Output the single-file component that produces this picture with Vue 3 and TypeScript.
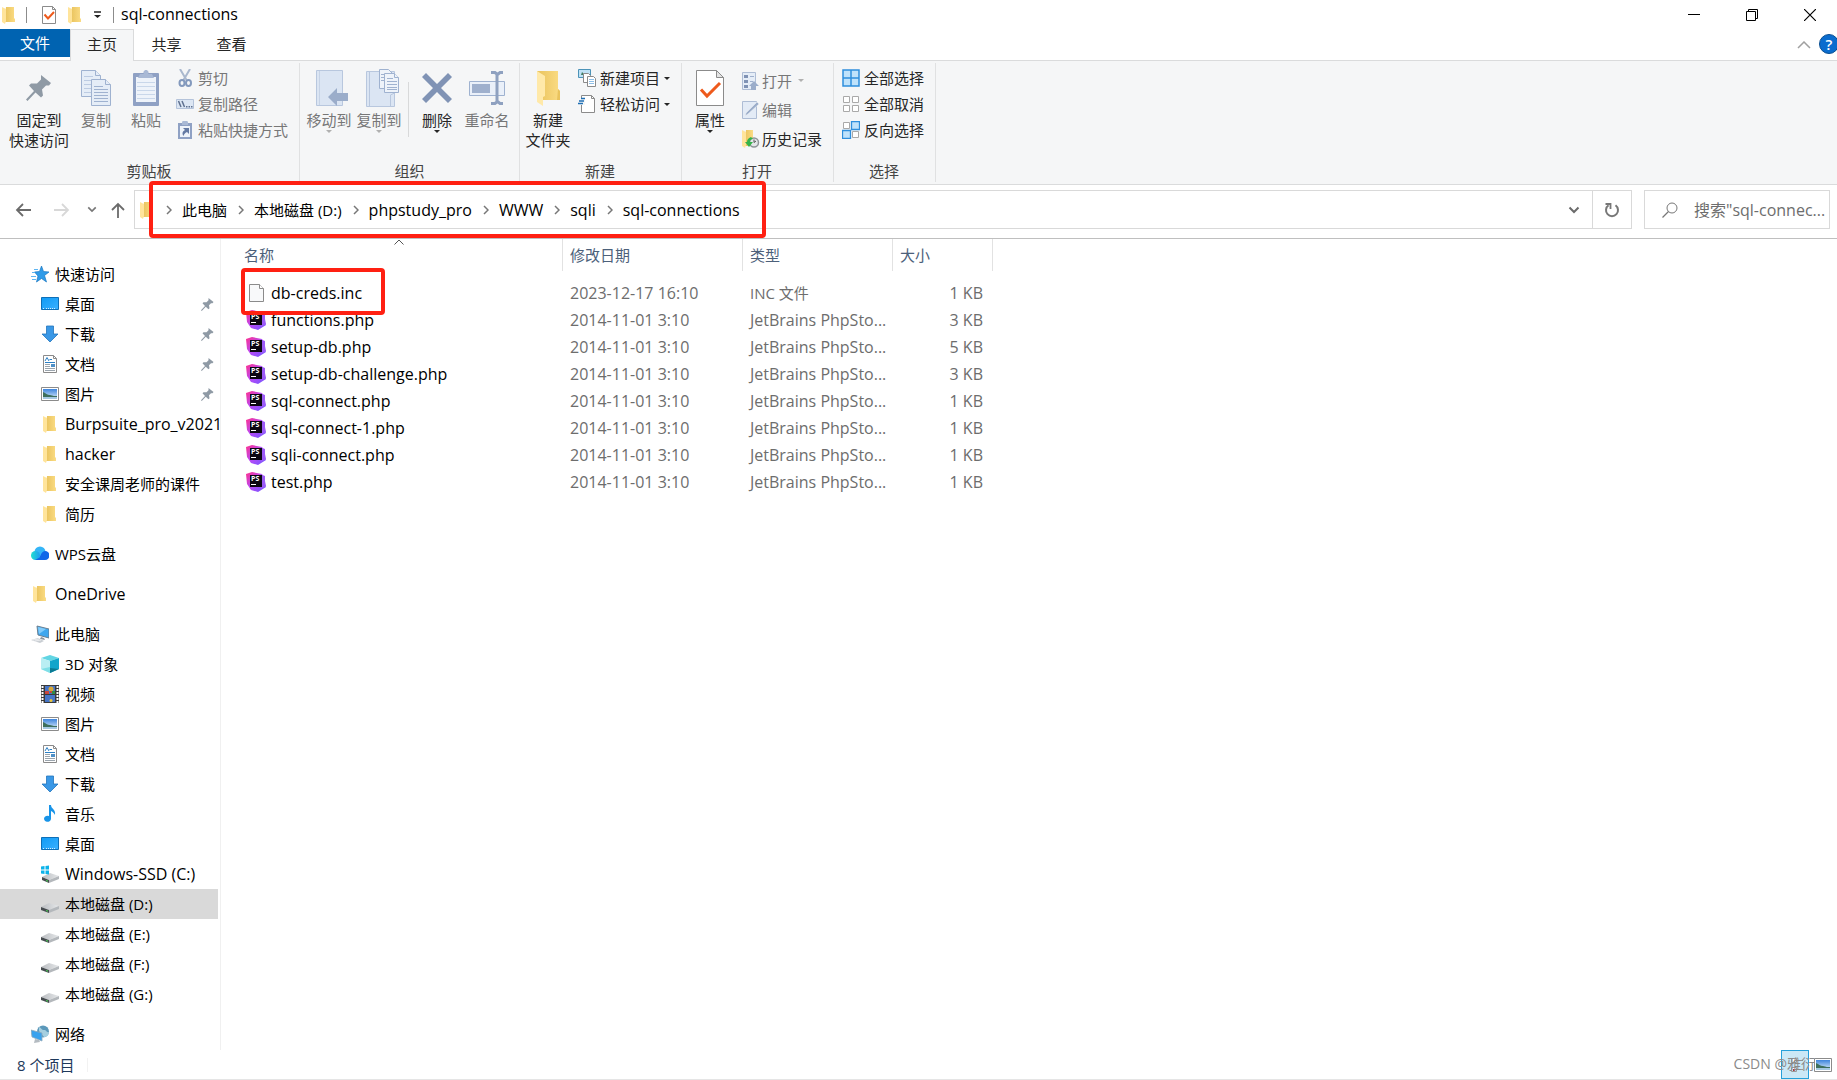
<script setup lang="ts">
interface NavItem {
  text: string
  icon: string
  root?: boolean
  gap?: boolean
  pinned?: boolean
  selected?: boolean
}
interface FileRow {
  name: string
  date: string
  type: string
  size: string
  icon: string
}

// Text without Chinese characters is set one size larger to match the weight of the Chinese text.
const isLatin = (text: string): boolean => !/[\u4e00-\u9fff]/.test(text)

const tabs: string[] = ['共享', '查看']
const crumbs: string[] = ['此电脑', '本地磁盘 (D:)', 'phpstudy_pro', 'WWW', 'sqli', 'sql-connections']

const nav: NavItem[] = [
  { text: '快速访问', icon: 'star', root: true },
  { text: '桌面', icon: 'desktop', pinned: true },
  { text: '下载', icon: 'download', pinned: true },
  { text: '文档', icon: 'document', pinned: true },
  { text: '图片', icon: 'picture', pinned: true },
  { text: 'Burpsuite_pro_v2021', icon: 'folder' },
  { text: 'hacker', icon: 'folder' },
  { text: '安全课周老师的课件', icon: 'folder' },
  { text: '简历', icon: 'folder' },
  { text: 'WPS云盘', icon: 'cloud', root: true, gap: true },
  { text: 'OneDrive', icon: 'folder', root: true, gap: true },
  { text: '此电脑', icon: 'pc', root: true, gap: true },
  { text: '3D 对象', icon: 'cube' },
  { text: '视频', icon: 'video' },
  { text: '图片', icon: 'picture' },
  { text: '文档', icon: 'document' },
  { text: '下载', icon: 'download' },
  { text: '音乐', icon: 'music' },
  { text: '桌面', icon: 'desktop' },
  { text: 'Windows-SSD (C:)', icon: 'windrive' },
  { text: '本地磁盘 (D:)', icon: 'drive', selected: true },
  { text: '本地磁盘 (E:)', icon: 'drive' },
  { text: '本地磁盘 (F:)', icon: 'drive' },
  { text: '本地磁盘 (G:)', icon: 'drive' },
  { text: '网络', icon: 'network', root: true, gap: true },
]

const php = (name: string, size: string): FileRow => ({
  name,
  date: '2014-11-01 3:10',
  type: 'JetBrains PhpSto...',
  size,
  icon: 'phpstorm',
})
const files: FileRow[] = [
  { name: 'db-creds.inc', date: '2023-12-17 16:10', type: 'INC 文件', size: '1 KB', icon: 'blank' },
  php('functions.php', '3 KB'),
  php('setup-db.php', '5 KB'),
  php('setup-db-challenge.php', '3 KB'),
  php('sql-connect.php', '1 KB'),
  php('sql-connect-1.php', '1 KB'),
  php('sqli-connect.php', '1 KB'),
  php('test.php', '1 KB'),
]
</script>

<template>
  <div class="window">
    <svg class="sprite" width="0" height="0" aria-hidden="true">
      <defs>
        <linearGradient id="g-fold" x1="0" x2="1"><stop offset="0" stop-color="#e9c35d" /><stop offset="1" stop-color="#fbdc84" /></linearGradient>
        <linearGradient id="g-desk" x1="0" y1="0" x2="1" y2="1"><stop offset="0" stop-color="#0f9bf5" /><stop offset="1" stop-color="#3bb0ff" /></linearGradient>
        <linearGradient id="g-sky" x1="0" y1="0" x2="0" y2="1"><stop offset="0" stop-color="#3d84dc" /><stop offset="1" stop-color="#e2f2ff" /></linearGradient>
        <linearGradient id="g-cloud" x1="0" x2="1"><stop offset="0" stop-color="#21dfd1" /><stop offset="1" stop-color="#1e9cf0" /></linearGradient>
        <linearGradient id="g-ps" x1="0" y1="0" x2="1" y2="1"><stop offset="0" stop-color="#ff318c" /><stop offset="0.5" stop-color="#b74af7" /><stop offset="1" stop-color="#6b57ff" /></linearGradient>
        <linearGradient id="g-drive" x1="0" x2="1"><stop offset="0" stop-color="#b9bcc0" /><stop offset="1" stop-color="#e6e8ea" /></linearGradient>
        <symbol id="i-folder" viewBox="0 0 18 18">
          <path d="M6 1h8v11l1 1v3H5z" fill="url(#g-fold)" /><path d="M2 1l4 2v12l-1 3-3-2z" fill="#ffe49b" />
        </symbol>
        <symbol id="i-bigfolder" viewBox="0 0 26 36">
          <path d="M2 1h21v18l2 2v9H8z" fill="url(#g-fold)" /><path d="M23 19l2 2v9h-3z" fill="#e9c35d" /><path d="M2 1l8 5v20l-2 1v9l-6-4z" fill="#ffe9a9" />
        </symbol>
        <symbol id="i-checkdoc" viewBox="0 0 28 36">
          <path d="M.5.5h20l7 7v28H.5z" fill="#fff" stroke="#8b8b8b" /><path d="M20.5.5v7h7z" fill="#e4e4e4" stroke="#8b8b8b" /><path d="M5 19.5l6 6.500L24 13" fill="none" stroke="#ee5a1c" stroke-width="3" />
        </symbol>
        <symbol id="i-smallcheck" viewBox="0 0 14 18">
          <path d="M.5.5h10l3 3v14H.5z" fill="#fff" stroke="#8b8b8b" /><path d="M10.500.5v3h3" fill="none" stroke="#8b8b8b" /><path d="M2.500 8.500l3.500 4 6-6.500" fill="none" stroke="#ee5a1c" stroke-width="2" />
        </symbol>
        <symbol id="i-pin" viewBox="0 0 26 26">
          <path d="M15 0l10 8-2 2.500h-3l-4 4 1 6-2 2-5.500-5L1.500 26 0 24.500l8-8.500L3 10.500l2-2h6l4-4z" fill="#8f9aa5" />
        </symbol>
        <symbol id="i-copy" viewBox="0 0 30 36">
          <g fill="#e5edf7" stroke="#9fb2d0"><path d="M.5.5h14l5 5v21H.5z" /><path d="M14.500.5v5h5" /><path d="M3 6.500h9M3 10.500h13M3 14.500h13M3 18.500h13M3 22.500h13" stroke="#bccbe2" /><path d="M10.500 9.500h14l5 5v21h-19z" /><path d="M24.500 9.500v5h5" /><path d="M13 16.500h9M13 19.500h14M13 22.500h14M13 25.500h14M13 28.500h14M13 31.500h14" /></g>
        </symbol>
        <symbol id="i-paste" viewBox="0 0 26 36">
          <rect y="3" width="26" height="33" rx="1" fill="#8fa1c4" /><path d="M3 7h20v25H3z" fill="#eef3fa" /><path d="M4 12.500h18M4 16.500h18M4 20.500h18M4 24.500h18M4 28.500h18" stroke="#c9d7ea" /><path d="M7 4h4a2.500 2.500 0 1 1 4 0h4l2 4H5z" fill="#a9b9d5" />
        </symbol>
        <symbol id="i-cut" viewBox="0 0 18 18">
          <path d="M4 0l6.500 11M14 0L7.500 11" stroke="#aab8ce" stroke-width="2" /><g fill="none" stroke="#8399bd" stroke-width="2"><ellipse cx="6" cy="14" rx="2.500" ry="3" /><ellipse cx="12.500" cy="14" rx="2.500" ry="3" /></g>
        </symbol>
        <symbol id="i-path" viewBox="0 0 18 18">
          <path d="M.5 4.500h17v9H.5z" fill="#dce6f3" stroke="#b4c3da" /><path d="M2.500 6l2.500 6M6 6l2.500 6" stroke="#5f7190" stroke-width="1.500" /><path d="M10 11h1.500v1.500H10zM12.500 11H14v1.500h-1.500zM15 11h1.500v1.500H15z" fill="#5f7190" />
        </symbol>
        <symbol id="i-shortcut" viewBox="0 0 18 18">
          <path d="M2 2h14v16H2z" fill="#8fa1c4" /><path d="M6 1.500a3 2 0 0 1 6 0V4H6z" fill="#a9b9d5" /><path d="M4 5h10v11H4z" fill="#eef3fa" /><path d="M7 7h6v6l-2-2c-2 1-3 2-3.500 4C5.500 12 7 10 9 9z" fill="#6379a3" />
        </symbol>
        <symbol id="i-moveto" viewBox="-8 0 42 36">
          <path d="M.5.5h26v35H.5z" fill="#dbe5f3" stroke="#b8c7de" /><path d="M3.500 1v34" stroke="#c6d3e6" /><path d="M12 27l9-9v5h11v8H21v5z" fill="#9badca" />
        </symbol>
        <symbol id="i-copyto" viewBox="-8 0 42 38">
          <path d="M.5 2.500h28v35H.5z" fill="#dbe5f3" stroke="#b8c7de" /><path d="M3.500 3v34M24.500 37V26l4-2v13" fill="none" stroke="#b8c7de" /><g fill="#eef3fa" stroke="#9fb2d0"><path d="M13.500.5h9l4 4v15h-13z" /><path d="M15 5.500h8M15 8.500h8M15 11.500h8" /><path d="M18.500 4.500h10l4 4v15h-14z" /><path d="M28.500 4.500v4h4M21 9.500h6M21 12.500h10M21 15.500h10M21 18.500h10M21 20.500h10" /></g>
        </symbol>
        <symbol id="i-delete" viewBox="0 0 32 32">
          <path d="M1 5l4-4 11 11L27 1l4 4-11 11 11 11-4 4-11-11L5 31l-4-4 11-11z" fill="#8093b5" />
        </symbol>
        <symbol id="i-rename" viewBox="0 0 36 34">
          <path d="M.5 10.500h35v14H.5z" fill="#eaf0f9" stroke="#9fb2d0" /><path d="M3 13h18v9H3z" fill="#9fb0cd" /><path d="M22 1.500h4l2.500 2 2.500-2h3M22 32.500h4l2.500-2 2.500 2h3M28 3v28" fill="none" stroke="#8fa1c0" stroke-width="3" />
        </symbol>
        <symbol id="i-newitem" viewBox="0 0 18 18">
          <path d="M.5.5h12v8H.5z" fill="#bfe2f6" stroke="#4c93b8" /><path d="M4 3l3 3H3z" fill="#3f7c62" /><path d="M5.500 4.500h5l2 2v7h-7z" fill="#fff" stroke="#8b8b8b" /><path d="M9.500 7.500h6l2 2v8h-8z" fill="#fff" stroke="#8b8b8b" /><path d="M11 10.500h5M11 12.500h5M11 14.500h5" stroke="#8ebfe8" />
        </symbol>
        <symbol id="i-easy" viewBox="0 0 18 18">
          <path d="M3.500.5h10l3 3v14h-13z" fill="#fff" stroke="#8b8b8b" /><path d="M13.500.5v3h3" fill="none" stroke="#8b8b8b" /><path d="M2 3h5v7H2z" fill="#f5f6f7" /><path d="M3 3.500h4M1 6h5M0 8.500h5" stroke="#1f6fb5" stroke-width="1.300" />
        </symbol>
        <symbol id="i-open" viewBox="0 0 18 18">
          <path d="M.5.5h13v17H.5z" fill="#e5edf7" stroke="#aebdd5" /><path d="M2 3h4v3H2zM2 8h4v3H2zM2 13h4v3H2z" fill="#8093b5" /><path d="M8 4.500h4M8 9.500h3" stroke="#9fb0cd" /><path d="M12 9l5 5h-3v4h-5v-4H7z" fill="#9badca" />
        </symbol>
        <symbol id="i-edit" viewBox="0 0 18 18">
          <path d="M.5.5h14v17H.5z" fill="#e3ebf6" stroke="#aebdd5" /><path d="M3 15l1-3L15 1l2 2L6 13z" fill="#9badca" stroke="#f5f6f7" stroke-width=".5" />
        </symbol>
        <symbol id="i-history" viewBox="0 0 18 18">
          <path d="M4 0h7v16H3z" fill="url(#g-fold)" /><path d="M0 0l4 2v13l-1 3-3-2z" fill="#ffe49b" /><circle cx="12" cy="12.500" r="4.500" fill="#e3e6e8" stroke="#8f9498" stroke-width="1.500" /><path d="M12 9.500v3l2-1.500" fill="none" stroke="#555" /><path d="M9 7c-3 1-4 3-4 5H3l4 5 4-5H8c0-2 1-3 3-3z" fill="#35b34a" />
        </symbol>
        <symbol id="i-selall" viewBox="0 0 18 18">
          <path d="M1 1h16v16H1zM9 1v16M1 9h16" fill="#bfe2fb" stroke="#2f8fdd" stroke-width="1.500" />
        </symbol>
        <symbol id="i-selnone" viewBox="0 0 18 18">
          <path d="M1.500 1.500h6v6h-6zM10.500 1.500h6v6h-6zM1.500 10.500h6v6h-6zM10.500 10.500h6v6h-6z" fill="#fff" stroke="#a9a9a9" />
        </symbol>
        <symbol id="i-selinv" viewBox="0 0 18 18">
          <path d="M1.500 1.500h6v6h-6zM10.500 10.500h6v6h-6z" fill="#fff" stroke="#a9a9a9" /><path d="M9.500.5h8v8h-8zM.5 9.500h8v8h-8z" fill="#bfe2fb" stroke="#2f8fdd" stroke-width="1.300" />
        </symbol>
        <symbol id="i-star" viewBox="0 0 18 18">
          <path d="M10.500 1l2 5.500 5.500.5-4.500 3.500 2 6.500-5-3.500-5 3.500 1.500-6L3.500 7l5-.5z" fill="#2f9be8" stroke="#1a77c2" stroke-width=".7" /><path d="M3 4.500h4M1 7.500h3M0 11.500h5M1 14.500h4" stroke="#5db5f2" />
        </symbol>
        <symbol id="i-desktop" viewBox="0 0 18 18">
          <path d="M.5 2.500h17v12H.5z" fill="url(#g-desk)" stroke="#0d6fb8" /><path d="M2 13.500h1M5 13.500h10" stroke="#d6efff" stroke-dasharray="1 1" />
        </symbol>
        <symbol id="i-download" viewBox="0 0 18 18">
          <path d="M5.500 1h7v8h4.500l-8 8-8-8h4.500z" fill="#3a98e6" stroke="#2273bb" stroke-width=".8" />
        </symbol>
        <symbol id="i-document" viewBox="0 0 18 18">
          <path d="M2.500.5h10l3 3v14h-13z" fill="#fff" stroke="#8b8b8b" /><path d="M12.500.5v3h3" fill="none" stroke="#8b8b8b" /><path d="M4 6l2-3.500L8 6M8.500 4.500H11M4 7.500h10" fill="none" stroke="#2b7fc4" /><path d="M4 9.500h5M4 11.500h5M4 13.500h10M4 15.500h10" stroke="#9aa4ad" /><path d="M10 9h4v3h-4z" fill="#4d8fc7" />
        </symbol>
        <symbol id="i-picture" viewBox="0 0 18 18">
          <path d="M.5 2.500h17v13H.5z" fill="#fff" stroke="#8b8b8b" /><path d="M2 4h14v10H2z" fill="url(#g-sky)" /><path d="M2 7c3 1 4 3 7 3 3 1 5 1 7 1v1H2z" fill="#3e6f5c" /><path d="M2 12h14v2H2z" fill="#a5c8e2" />
        </symbol>
        <symbol id="i-cloud" viewBox="0 0 18 18">
          <circle cx="9" cy="7" r="5.500" fill="#35b5f7" /><circle cx="4.500" cy="10.500" r="4.500" fill="url(#g-cloud)" /><path d="M14 6a4.500 4.500 0 0 1 0 9H5c5 0 4-9 9-9z" fill="#1068e8" /><path d="M4 15h6c2-1 3-3 3-5z" fill="#1068e8" />
        </symbol>
        <symbol id="i-pc" viewBox="0 0 18 18">
          <path d="M6 1l12 3v9L7 10z" fill="#3fa7ee" stroke="#6b7f90" /><path d="M7 2l8 2-7 5z" fill="#84ccfa" /><path d="M10 12l3 1 1 2-5-1z" fill="#8b949c" /><path d="M0 15l7-2 6 3-4 2z" fill="#c9ced3" /><path d="M2 15l6-1M4 16l6-1" stroke="#fff" stroke-width=".6" />
        </symbol>
        <symbol id="i-cube" viewBox="0 0 18 18">
          <path d="M9 0l9 3-9 3-9-3z" fill="#62d5e3" /><path d="M0 3l9 3v12l-9-4z" fill="#b9eef3" /><path d="M18 3L9 6v12l9-4z" fill="#12a5cb" /><path d="M9 13l9 1-9 4z" fill="#0b7a93" /><path d="M0 14l9-2v6z" fill="#7fdfe7" />
        </symbol>
        <symbol id="i-video" viewBox="0 0 18 18">
          <path d="M0 0h18v18H0z" fill="#3a3a3a" /><path d="M1.500 1v17M16.500 1v17" stroke="#fff" stroke-width="2" stroke-dasharray="2 1" /><path d="M4 1h10v8H4zM4 10h10v7H4z" fill="#4676c8" /><circle cx="10" cy="4" r="2.500" fill="#d9a838" /><path d="M4 6h4v3H4zM9 6h3v2H9z" fill="#c9483f" /><path d="M11 6h3v3h-3z" fill="#2f8d46" /><circle cx="10" cy="15.500" r="1.500" fill="#ecc63a" />
        </symbol>
        <symbol id="i-music" viewBox="0 0 18 18">
          <path d="M8 0h2c0 4 5 4 4 10-1-2-2-3-4-4v8a3.500 3 0 1 1-2-3z" fill="#1894e8" />
        </symbol>
        <symbol id="i-drive" viewBox="0 0 18 18">
          <path d="M0 12l8-4 10 3-10 4z" fill="url(#g-drive)" /><path d="M0 12l8 3v3l-8-3z" fill="#474c50" /><path d="M8 15l10-4v3L8 18z" fill="#b4b8bc" /><path d="M5 15l2 .7v1L5 16z" fill="#45d64f" />
        </symbol>
        <symbol id="i-windrive" viewBox="0 0 18 18">
          <path d="M1 12l8-4 9 3-10 4z" fill="url(#g-drive)" /><path d="M1 12l7 3v3l-7-3z" fill="#474c50" /><path d="M8 15l10-4v3L8 18z" fill="#b4b8bc" /><path d="M5 15l2 .7v1L5 16z" fill="#45d64f" /><path d="M0 1.500L3.500 1v3.500H0zM4.500 1L8 .5v4H4.500zM0 5.500h3.500V9L0 8.500zM4.500 5.500H8v4L4.500 9z" fill="#0db3ea" />
        </symbol>
        <symbol id="i-network" viewBox="0 0 18 18">
          <circle cx="12" cy="6.500" r="6" fill="#5b98ba" /><path d="M8 2c3 1 2 3 5 3s2 3 5 2c0 3-2 5-5 5L8 6z" fill="#a5cfe0" /><path d="M0 5l11 3v8L1 12z" fill="#39a2ee" stroke="#8fa9bb" stroke-width=".8" /><path d="M4 14l4 1 1 2-6 1z" fill="#b4bbc1" />
        </symbol>
        <symbol id="i-blank" viewBox="0 0 20 20">
          <path d="M3.500 1.500h10l4 4v13h-14z" fill="#f8f9fa" stroke="#8b8b8b" /><path d="M13.500 1.500v4h4" fill="#fff" stroke="#8b8b8b" />
        </symbol>
        <symbol id="i-phpstorm" viewBox="0 0 20 20">
          <path d="M0 2l6-2 10 2 3 6-1 3 2 4-8 5-7-2L1 12z" fill="url(#g-ps)" /><path d="M14 2l5 2v5l1 5-5 3z" fill="#9c5bf7" /><path d="M4 3h12v12H4z" fill="#0b0712" /><text x="5" y="9" font-size="7" font-weight="700" font-family="Open Sans, sans-serif" fill="#fff">PS</text><path d="M5 12.500h5" stroke="#fff" />
        </symbol>
        <symbol id="i-chev" viewBox="0 0 12 8"><path d="M1.500 1.500L6 6l4.500-4.500" fill="none" stroke="currentColor" stroke-width="2" /></symbol>
      </defs>
    </svg>

    <header class="titlebar">
      <svg class="ic18"><use href="#i-folder" /></svg>
      <span class="tsep"></span>
      <button class="quick" aria-label="属性"><svg class="ic-check"><use href="#i-smallcheck" /></svg></button>
      <button class="quick" aria-label="新建文件夹"><svg class="ic18"><use href="#i-folder" /></svg></button>
      <button class="quick more" aria-label="自定义快速访问工具栏"><svg width="7" height="7" viewBox="0 0 7 7"><path d="M0 1h7" stroke="#222" stroke-width="1.500" /><path d="M0 4h7L3.500 7z" fill="#222" /></svg></button>
      <span class="tsep"></span>
      <h1 class="title latin">sql-connections</h1>
      <div class="winbtns">
        <button aria-label="最小化"><svg width="12" height="12"><path d="M0 5.500h12" stroke="#000" /></svg></button>
        <button aria-label="还原"><svg width="12" height="12" fill="none" stroke="#000"><path d="M.5 2.500h9v9h-9zM2.500 2V.5h9v9H10" /></svg></button>
        <button aria-label="关闭"><svg width="12" height="12"><path d="M0 0l12 12M12 0L0 12" stroke="#000" stroke-width="1.200" /></svg></button>
      </div>
    </header>

    <nav class="tabs">
      <button class="tab file">文件</button>
      <button class="tab active">主页</button>
      <button v-for="t in tabs" :key="t" class="tab">{{ t }}</button>
      <button class="collapse" aria-label="折叠功能区"><svg width="14" height="8"><path d="M1 7l6-6 6 6" fill="none" stroke="#a0a0a0" stroke-width="1.500" /></svg></button>
      <button class="help" aria-label="帮助">?</button>
    </nav>

    <section class="ribbon">
      <div class="group clip">
        <div class="gbody">
          <button class="big wide"><span class="bi"><svg width="26" height="26"><use href="#i-pin" /></svg></span>固定到<br />快速访问</button>
          <button class="big off"><span class="bi"><svg width="30" height="36"><use href="#i-copy" /></svg></span>复制</button>
          <button class="big off"><span class="bi"><svg width="26" height="36"><use href="#i-paste" /></svg></span>粘贴</button>
          <div class="smalls">
            <button class="small off"><svg class="ic18"><use href="#i-cut" /></svg>剪切</button>
            <button class="small off"><svg class="ic18"><use href="#i-path" /></svg>复制路径</button>
            <button class="small off"><svg class="ic18"><use href="#i-shortcut" /></svg>粘贴快捷方式</button>
          </div>
        </div>
        <div class="glabel">剪贴板</div>
      </div>
      <div class="group org">
        <div class="gbody">
          <button class="big off"><span class="bi"><svg width="42" height="36"><use href="#i-moveto" /></svg></span>移动到<i class="caret"></i></button>
          <button class="big off"><span class="bi"><svg width="42" height="38"><use href="#i-copyto" /></svg></span>复制到<i class="caret"></i></button>
          <span class="isep"></span>
          <button class="big"><span class="bi"><svg width="32" height="32"><use href="#i-delete" /></svg></span>删除<i class="caret"></i></button>
          <button class="big off"><span class="bi"><svg width="36" height="34"><use href="#i-rename" /></svg></span>重命名</button>
        </div>
        <div class="glabel">组织</div>
      </div>
      <div class="group">
        <div class="gbody">
          <button class="big"><span class="bi"><svg width="26" height="36"><use href="#i-bigfolder" /></svg></span>新建<br />文件夹</button>
          <div class="smalls">
            <button class="small"><svg class="ic18"><use href="#i-newitem" /></svg>新建项目<i class="caret"></i></button>
            <button class="small"><svg class="ic18"><use href="#i-easy" /></svg>轻松访问<i class="caret"></i></button>
          </div>
        </div>
        <div class="glabel">新建</div>
      </div>
      <div class="group">
        <div class="gbody">
          <button class="big"><span class="bi"><svg width="28" height="36"><use href="#i-checkdoc" /></svg></span>属性<i class="caret"></i></button>
          <div class="smalls loose">
            <button class="small off"><svg class="ic18"><use href="#i-open" /></svg>打开<i class="caret"></i></button>
            <button class="small off"><svg class="ic18"><use href="#i-edit" /></svg>编辑</button>
            <button class="small"><svg class="ic18"><use href="#i-history" /></svg>历史记录</button>
          </div>
        </div>
        <div class="glabel">打开</div>
      </div>
      <div class="group">
        <div class="gbody">
          <div class="smalls">
            <button class="small"><svg class="ic18"><use href="#i-selall" /></svg>全部选择</button>
            <button class="small"><svg class="ic18"><use href="#i-selnone" /></svg>全部取消</button>
            <button class="small"><svg class="ic18"><use href="#i-selinv" /></svg>反向选择</button>
          </div>
        </div>
        <div class="glabel">选择</div>
      </div>
    </section>

    <section class="addressrow">
      <div class="history">
        <button aria-label="后退"><svg width="16" height="14"><path d="M16 7H2M8 1L2 7l6 6" fill="none" stroke="#6b6b6b" stroke-width="1.800" /></svg></button>
        <button aria-label="前进"><svg width="16" height="14"><path d="M0 7h14M8 1l6 6-6 6" fill="none" stroke="#d8d8d8" stroke-width="1.800" /></svg></button>
        <button class="recent" aria-label="最近位置"><svg width="10" height="7"><use href="#i-chev" /></svg></button>
        <button class="up" aria-label="上移"><svg width="14" height="16"><path d="M7 16V2M1 8l6-6 6 6" fill="none" stroke="#6b6b6b" stroke-width="1.800" /></svg></button>
      </div>
      <div class="address">
        <svg class="ic18"><use href="#i-folder" /></svg>
        <ol class="crumbs">
          <li v-for="c in crumbs" :key="c">
            <svg width="6" height="10"><path d="M1 1l4 4-4 4" fill="none" stroke="#777" stroke-width="1.500" /></svg>
            <a href="#" :class="{ latin: isLatin(c) }">{{ c }}</a>
          </li>
        </ol>
        <button class="drop" aria-label="上一个位置"><svg width="12" height="8"><use href="#i-chev" /></svg></button>
        <button class="refresh" aria-label="刷新"><svg width="16" height="16"><path d="M11.500 3.300A6 6 0 1 1 4.500 3.300" fill="none" stroke="#777" stroke-width="2" /><path d="M1.500 2h5v5" fill="none" stroke="#777" stroke-width="1.800" /></svg></button>
      </div>
      <label class="search">
        <svg width="16" height="16"><circle cx="10" cy="6" r="5" fill="none" stroke="#777" /><path d="M6.500 9.500L.5 15.500" stroke="#777" stroke-width="1.200" /></svg>
        <input class="latin" type="text" aria-label="搜索" placeholder="搜索&quot;sql-connec..." />
      </label>
      <div class="mark path"></div>
    </section>

    <main class="content">
      <aside class="sidebar">
        <a
          v-for="(n, i) in nav"
          :key="i"
          href="#"
          class="navitem"
          :class="{ root: n.root, gap: n.gap, selected: n.selected, latin: isLatin(n.text) }"
        >
          <svg class="ic18"><use :href="'#i-' + n.icon" /></svg>
          <span>{{ n.text }}</span>
          <svg v-if="n.pinned" class="pin"><use href="#i-pin" /></svg>
        </a>
      </aside>
      <section class="list">
        <table>
          <colgroup><col class="c-name" /><col class="c-date" /><col class="c-type" /><col class="c-size" /></colgroup>
          <thead>
            <tr>
              <th>名称<svg class="sort" width="10" height="6"><path d="M.5 5.500L5 1l4.500 4.500" fill="none" stroke="#555" /></svg></th>
              <th>修改日期</th>
              <th>类型</th>
              <th>大小</th>
            </tr>
          </thead>
          <tbody>
            <tr v-for="f in files" :key="f.name">
              <td class="name latin"><div><svg class="ic20"><use :href="'#i-' + f.icon" /></svg>{{ f.name }}</div></td>
              <td class="latin">{{ f.date }}</td>
              <td :class="{ latin: isLatin(f.type) }">{{ f.type }}</td>
              <td class="size latin">{{ f.size }}</td>
            </tr>
          </tbody>
        </table>
        <div class="mark row"></div>
      </section>
    </main>

    <footer class="status">
      <span class="count">8 个项目</span>
      <div class="views">
        <button class="on" aria-label="详细信息"><svg width="18" height="18"><path d="M5.500 2.500h5v4h-5zM5.500 11.500h5v4h-5z" fill="#fff" stroke="#999" /><path d="M7 13h2v2H7z" fill="#b5382c" /><path d="M12 4.500h5M12 13.500h5" stroke="#999" /></svg></button>
        <button aria-label="大图标"><svg class="ic18"><use href="#i-picture" /></svg></button>
      </div>
      <span class="watermark">CSDN @雅衍</span>
    </footer>
  </div>
</template>

<style>
body {
  margin: 0;
  background: #fff;
}
</style>

<style scoped>
.window {
  display: flex;
  flex-direction: column;
  min-height: 100vh;
  overflow: hidden;
  color: #000;
  font: 15px/20px "Open Sans", "Noto Sans CJK SC", sans-serif;
}
.window * {
  box-sizing: border-box;
}
.sprite {
  position: absolute;
}
svg {
  flex: none;
  display: block;
}
button {
  padding: 0;
  border: 0;
  background: none;
  color: inherit;
  font: inherit;
}
a {
  color: inherit;
  text-decoration: none;
}
.latin {
  font-size: 16px;
}
.ic18 {
  width: 18px;
  height: 18px;
}
.ic20 {
  width: 20px;
  height: 20px;
}

.titlebar {
  display: flex;
  align-items: center;
  height: 29px;
}
.tsep {
  width: 1px;
  height: 16px;
  margin: 0 15px 0 8px;
  background: #8c8c8c;
}
.quick {
  margin-right: 10px;
}
.ic-check {
  width: 14px;
  height: 18px;
}
.quick.more {
  margin: 0 4px 0 0;
}
.titlebar .more + .tsep {
  margin-right: 7px;
}
.title {
  margin: 0;
  padding-bottom: 2px;
  font-weight: 400;
  line-height: 22px;
}
.winbtns {
  display: flex;
  margin: 0 -2px 0 auto;
}
.winbtns button {
  display: flex;
  align-items: center;
  justify-content: center;
  width: 58px;
  height: 29px;
}

.tabs {
  display: flex;
  height: 31px;
  color: #262626;
}
.tab {
  width: 65px;
  height: 31px;
  padding-bottom: 2px;
}
.tab.file {
  width: 70px;
  height: 28px;
  padding: 0;
  background: #0063b1;
  color: #fff;
}
.tab.active {
  z-index: 1;
  width: 64px;
  height: 32px;
  border: 1px solid #dadbdc;
  border-bottom: 0;
  padding-bottom: 4px;
  background: #f5f6f7;
}
.collapse {
  margin: 0 8px 0 auto;
}
.help {
  width: 20px;
  height: 20px;
  margin: 5px -2px 0 0;
  border: 1px solid #0a4f92;
  border-radius: 50%;
  background: #0a6cce;
  color: #fff;
  font-weight: 600;
  line-height: 18px;
}

.ribbon {
  display: flex;
  height: 125px;
  padding: 2px 0;
  border-top: 1px solid #dadbdc;
  border-bottom: 1px solid #dadbdc;
  background: #f5f6f7;
}
.group {
  display: flex;
  flex-direction: column;
  justify-content: space-between;
  padding: 0 11px 0 3px;
  border-right: 1px solid #e0e1e2;
}
.group.clip {
  padding-left: 7px;
}
.group.org {
  padding: 0 7px 0 4px;
}
.gbody {
  display: flex;
}
.glabel {
  margin-right: -7px;
  line-height: 22px;
  color: #444;
  text-align: center;
}
.clip .glabel,
.org .glabel {
  margin-right: -3px;
}
.big {
  display: flex;
  flex-direction: column;
  align-items: center;
  width: 50px;
  padding-top: 7px;
  color: #262626;
  white-space: nowrap;
}
.big.wide {
  width: 64px;
}
.bi {
  display: flex;
  align-items: center;
  justify-content: center;
  height: 36px;
  margin-bottom: 4px;
}
.caret {
  width: 6px;
  border: 3px solid transparent;
  border-top-color: #262626;
  border-bottom: 0;
}
.off .caret {
  border-top-color: #b0b0b0;
}
.isep {
  width: 1px;
  height: 55px;
  margin: 19px 3px 0 4px;
  background: #d8d9da;
}
.smalls {
  display: flex;
  flex-direction: column;
  margin-left: 5px;
  padding-top: 2px;
}
.small {
  display: flex;
  align-items: center;
  gap: 4px;
  height: 26px;
  color: #262626;
}
.big.off,
.small.off {
  color: #777;
}
.smalls.loose {
  margin-left: 7px;
  padding-top: 3px;
}
.loose .small {
  gap: 2px;
  height: 29px;
}
.loose .caret {
  margin-left: 4px;
}

.addressrow {
  position: relative;
  display: flex;
  padding: 5px 7px 9px 0;
  border-bottom: 1px solid #bfbfbf;
}
.history {
  display: flex;
  align-items: center;
  gap: 23px;
  width: 134px;
  padding-left: 15px;
  color: #777;
}
.history .recent {
  margin-left: -6px;
}
.history .up {
  margin-left: -9px;
}
.address {
  display: flex;
  flex: 1;
  align-items: center;
  height: 39px;
  padding-left: 3px;
  border: 1px solid #d9d9d9;
}
.crumbs {
  display: flex;
  flex: 1;
  margin: 0;
  padding: 0 0 0 10px;
  list-style: none;
}
.crumbs li {
  display: flex;
  align-items: center;
  gap: 10px;
  margin-right: 11px;
}
.drop {
  padding: 0 12px;
  color: #6b6b6b;
}
.refresh {
  display: flex;
  align-items: center;
  justify-content: center;
  align-self: stretch;
  width: 39px;
  border-left: 1px solid #d9d9d9;
}
.search {
  display: flex;
  align-items: center;
  gap: 16px;
  width: 186px;
  margin-left: 12px;
  padding-left: 17px;
  border: 1px solid #d9d9d9;
}
.search input {
  flex: 1;
  min-width: 0;
  padding: 0;
  border: 0;
  outline: 0;
  font-family: inherit;
}
.search input::placeholder {
  color: #6d6d6d;
  opacity: 1;
}
.mark {
  position: absolute;
  border: 4px solid #ff2012;
  border-radius: 4px;
  pointer-events: none;
}
.mark.path {
  top: -4px;
  left: 149px;
  width: 617px;
  height: 57px;
}

.content {
  display: flex;
  flex: 1;
}
.sidebar {
  width: 221px;
  padding-top: 20px;
  border-right: 1px solid #f0f0f0;
}
.navitem {
  display: flex;
  align-items: center;
  gap: 6px;
  width: 218px;
  height: 30px;
  padding-left: 41px;
  white-space: nowrap;
}
.navitem.root {
  padding-left: 31px;
}
.navitem.gap {
  margin-top: 10px;
}
.navitem.selected {
  background: #d9d9d9;
}
.pin {
  width: 13px;
  height: 13px;
  margin: 0 4px 0 auto;
}

.list {
  position: relative;
  flex: 1;
}
table {
  width: 772px;
  border-collapse: separate;
  border-spacing: 0;
  table-layout: fixed;
}
.c-name {
  width: 342px;
}
.c-date {
  width: 180px;
}
.c-type {
  width: 150px;
}
.c-size {
  width: 100px;
}
th {
  position: relative;
  height: 32px;
  padding: 0 0 0 7px;
  border-right: 1px solid #e2e2e2;
  color: #4c607a;
  font-weight: 400;
  text-align: left;
}
th:first-child {
  padding-left: 23px;
}
.sort {
  position: absolute;
  top: 0;
  left: 173px;
}
tbody::before {
  content: "";
  display: block;
  height: 8px;
}
td {
  height: 27px;
  padding: 0 0 0 7px;
  color: #6d6d6d;
  white-space: nowrap;
}
td.name {
  padding-left: 25px;
  color: #000;
}
td.name div {
  display: flex;
  align-items: center;
  gap: 5px;
}
td.size {
  padding-right: 10px;
  text-align: right;
}
.mark.row {
  top: 29px;
  left: 20px;
  width: 144px;
  height: 47px;
}

.status {
  position: relative;
  display: flex;
  align-items: center;
  justify-content: space-between;
  height: 30px;
  border-bottom: 1px solid #e5e5e5;
  color: #1e395b;
}
.count {
  margin-left: 17px;
  padding-right: 13px;
  border-right: 1px solid #f2f2f2;
  line-height: 14px;
}
.views {
  display: flex;
  height: 29px;
  margin-right: 5px;
}
.views button {
  display: flex;
  align-items: center;
}
.views .on {
  justify-content: center;
  width: 28px;
  margin-right: 5px;
  border: 1px solid #26a0da;
  background: #cbe8f6;
}
.watermark {
  position: absolute;
  right: 22px;
  bottom: 5px;
  color: #8a8a8a;
  font-size: 14px;
}
</style>
